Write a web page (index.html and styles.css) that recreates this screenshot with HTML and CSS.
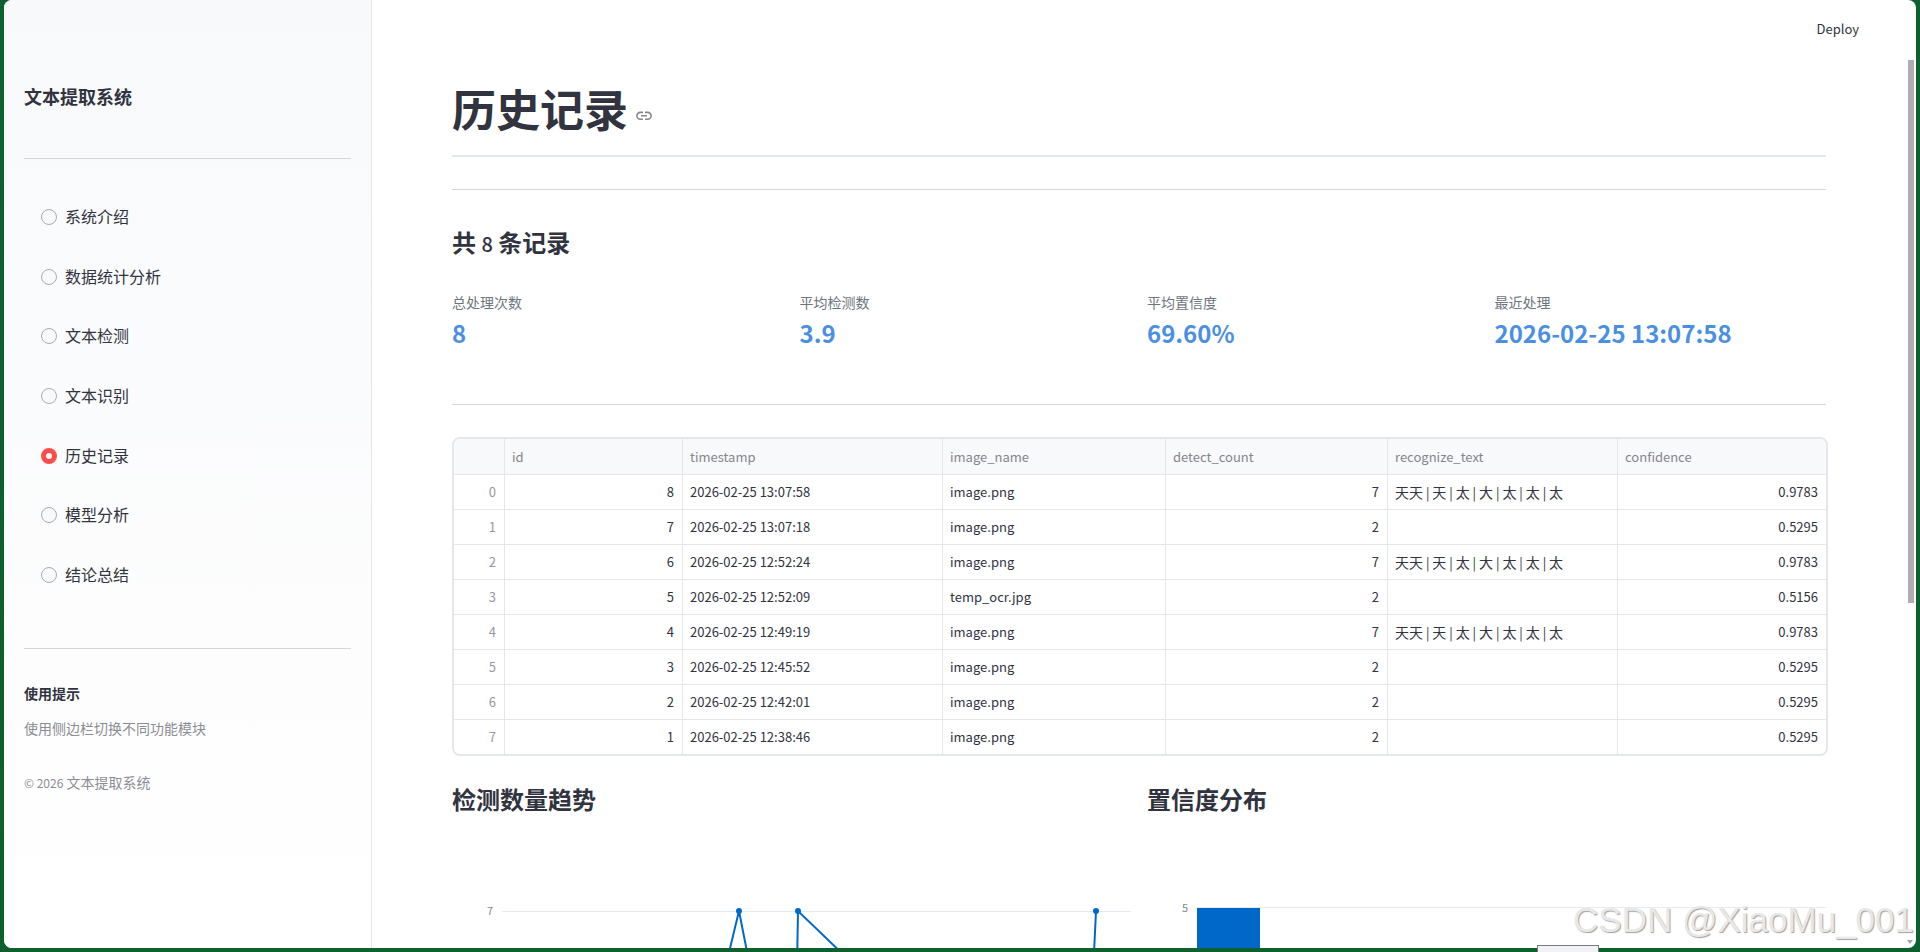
FILE: index.html
```html
<!DOCTYPE html>
<html lang="zh-CN">
<head>
  <meta charset="UTF-8" />
  <meta name="viewport" content="width=device-width, initial-scale=1.0"/>
  <title>文本提取系统</title>
  <link rel="stylesheet" href="styles.css">
</head>
<body>

  <div class="app">
    <aside class="sidebar">
      <h3 class="brand">文本提取系统</h3>
      <hr>
      <nav class="menu">
        <label><input type="radio" name="page"><span>系统介绍</span></label>
        <label><input type="radio" name="page"><span>数据统计分析</span></label>
        <label><input type="radio" name="page"><span>文本检测</span></label>
        <label><input type="radio" name="page"><span>文本识别</span></label>
        <label><input type="radio" name="page" checked><span>历史记录</span></label>
        <label><input type="radio" name="page"><span>模型分析</span></label>
        <label><input type="radio" name="page"><span>结论总结</span></label>
      </nav>
      <hr>
      <p class="tip-title">使用提示</p>
      <p class="caption">使用侧边栏切换不同功能模块</p>
      <p class="caption copyright"><small>© 2026</small> 文本提取系统</p>
    </aside>

    <main class="main">
      <header class="toolbar">
        <button class="deploy-btn">Deploy</button>
      </header>

      <div class="content">
        <h1>历史记录
          <a href="#history" aria-label="链接">
            <svg width="16" height="16" viewBox="0 0 16 16" fill="none" stroke="#85868d" stroke-width="1.6">
              <path d="M7 4.4H4.3a3.4 3.4 0 0 0 0 6.8H7M9 4.4h2.7a3.4 3.4 0 0 1 0 6.8H9M5 7.8h6"/>
            </svg>
          </a>
        </h1>
        <hr>

        <h2>共 <span>8</span> 条记录</h2>

        <div class="metrics">
          <div class="metric">
            <div class="metric-label">总处理次数</div>
            <div class="metric-value">8</div>
          </div>
          <div class="metric">
            <div class="metric-label">平均检测数</div>
            <div class="metric-value">3.9</div>
          </div>
          <div class="metric">
            <div class="metric-label">平均置信度</div>
            <div class="metric-value">69.60%</div>
          </div>
          <div class="metric">
            <div class="metric-label">最近处理</div>
            <div class="metric-value">2026-02-25 13:07:58</div>
          </div>
        </div>
        <hr>

        <div class="table-box">
          <table>
            <colgroup>
              <col class="c-index"><col class="c-id"><col class="c-time"><col class="c-name"><col class="c-count"><col class="c-text"><col>
            </colgroup>
            <thead>
              <tr><th></th><th>id</th><th>timestamp</th><th>image_name</th><th>detect_count</th><th>recognize_text</th><th>confidence</th></tr>
            </thead>
            <tbody>
              <tr><td>0</td><td>8</td><td>2026-02-25 13:07:58</td><td>image.png</td><td>7</td><td><span>天天</span> | <span>天</span> | <span>太</span> | <span>大</span> | <span>太</span> | <span>太</span> | <span>太</span></td><td>0.9783</td></tr>
              <tr><td>1</td><td>7</td><td>2026-02-25 13:07:18</td><td>image.png</td><td>2</td><td></td><td>0.5295</td></tr>
              <tr><td>2</td><td>6</td><td>2026-02-25 12:52:24</td><td>image.png</td><td>7</td><td><span>天天</span> | <span>天</span> | <span>太</span> | <span>大</span> | <span>太</span> | <span>太</span> | <span>太</span></td><td>0.9783</td></tr>
              <tr><td>3</td><td>5</td><td>2026-02-25 12:52:09</td><td>temp_ocr.jpg</td><td>2</td><td></td><td>0.5156</td></tr>
              <tr><td>4</td><td>4</td><td>2026-02-25 12:49:19</td><td>image.png</td><td>7</td><td><span>天天</span> | <span>天</span> | <span>太</span> | <span>大</span> | <span>太</span> | <span>太</span> | <span>太</span></td><td>0.9783</td></tr>
              <tr><td>5</td><td>3</td><td>2026-02-25 12:45:52</td><td>image.png</td><td>2</td><td></td><td>0.5295</td></tr>
              <tr><td>6</td><td>2</td><td>2026-02-25 12:42:01</td><td>image.png</td><td>2</td><td></td><td>0.5295</td></tr>
              <tr><td>7</td><td>1</td><td>2026-02-25 12:38:46</td><td>image.png</td><td>2</td><td></td><td>0.5295</td></tr>
            </tbody>
          </table>
        </div>

        <div class="charts">
          <section>
            <h2>检测数量趋势</h2>
            <svg class="chart" viewBox="0 0 679 400">
              <path class="grid" d="M50 80.5H679"/>
              <text x="41" y="84">7</text>
              <polyline class="line" points="85,354 147,354 221,354 287,80 341,354 346,80 631,354 644,80"/>
              <g class="dots">
                <circle cx="85" cy="354" r="3"/>
                <circle cx="147" cy="354" r="3"/>
                <circle cx="221" cy="354" r="3"/>
                <circle cx="287" cy="80" r="3"/>
                <circle cx="341" cy="354" r="3"/>
                <circle cx="346" cy="80" r="3"/>
                <circle cx="631" cy="354" r="3"/>
                <circle cx="644" cy="80" r="3"/>
              </g>
            </svg>
          </section>
          <section>
            <h2>置信度分布</h2>
            <svg class="chart" viewBox="0 0 679 400">
              <path class="grid" d="M50 76.5H679"/>
              <text x="41" y="81">5</text>
              <rect class="bar" x="50" y="77" width="63" height="277"/>
            </svg>
          </section>
        </div>
      </div>

      <div class="scroll-thumb"></div>
      <div class="scroll-arrow"></div>
    </main>
  </div>

  <div class="taskbar-tip"></div>
  <div class="watermark">CSDN @XiaoMu_001</div>

</body>
</html>
```

FILE: styles.css
```css
* {
  box-sizing: border-box;
}

body {
  margin: 0;
  height: 100vh;
  padding: 0 4px 4px;
  background-color: #0f602f;
  font-family: "Noto Sans CJK SC", sans-serif;
  font-size: 14px;
  color: #31333f;
  overflow: hidden;
}

h1, h2, h3, p {
  margin: 0;
}

hr {
  width: 100%;
  height: 1px;
  margin: 32px 0;
  border: none;
  background-color: #d6d6d9;
}

.app {
  display: flex;
  height: 100%;
  background-color: white;
  border-radius: 8px;
  overflow: hidden;
}

/* sidebar */
.sidebar {
  flex: 0 0 368px;
  padding: 83px 20px 0;
  background: linear-gradient(180deg, #f8f9fb 0%, #ffffff 100%);
  border-right: 1px solid #e3e6ea;
}

.brand {
  font-size: 18px;
  line-height: 26px;
}

.sidebar .brand + hr {
  margin: 49px 0 28px;
}

.menu {
  display: grid;
  grid-auto-rows: 1fr;
  height: 418px;
}

.menu label {
  display: flex;
  align-items: center;
  gap: 8px;
  padding-left: 17px;
  font-size: 16px;
  line-height: 24px;
}

.menu span {
  padding-bottom: 2px;
}

.menu input {
  appearance: none;
  width: 16px;
  height: 16px;
  margin: 0;
  border: 1px solid #aaabb0;
  border-radius: 50%;
  background-color: #f8f9fb;
}

.menu input:checked {
  border: 5px solid #ff4b4b;
}

.menu + hr {
  margin: 43px 0 32px;
}

.tip-title {
  font-weight: bold;
  line-height: 24px;
}

.caption {
  margin-top: 12px;
  line-height: 22px;
  color: #8c8d94;
}

.caption small {
  font-size: 12px;
}

.copyright {
  margin-top: 32px;
}

/* main area */
.main {
  position: relative;
  flex: 1;
  min-width: 0;
  overflow: hidden;
}

.toolbar {
  display: flex;
  justify-content: flex-end;
  align-items: center;
  height: 60px;
  padding: 0 57px 4px 0;
}

.deploy-btn {
  padding: 0;
  border: none;
  background: none;
  font-family: inherit;
  font-size: 13px;
  color: #31333f;
  cursor: pointer;
}

.content {
  padding: 20px 90px 0 80px;
}

h1 {
  display: flex;
  align-items: center;
  gap: 8px;
  height: 77px;
  padding-bottom: 19px;
  border-bottom: 2px solid #e1e8ed;
  font-size: 44px;
  line-height: 56px;
}

h1 a {
  height: 16px;
  margin-top: 10px;
  line-height: 0;
}

h2 {
  font-size: 24px;
  line-height: 32px;
}

h2 span {
  font-size: 20px;
  font-weight: 500;
}

.content h2 {
  padding: 4px 0 8px;
}

.metrics {
  display: grid;
  grid-template-columns: repeat(4, 1fr);
  gap: 16px;
  margin-top: 22px;
}

.metric-label {
  line-height: 24px;
  color: #6c757d;
}

.metric-value {
  font-size: 24px;
  font-weight: 600;
  line-height: 38px;
  color: #4a90e2;
}

.metrics + hr {
  margin-top: 52px;
}

.table-box {
  margin-right: -2px;
  border: 2px solid #e4e8ec;
  border-radius: 8px;
  overflow: hidden;
}

table {
  width: 100%;
  table-layout: fixed;
  border-collapse: separate;
  border-spacing: 0;
}

.c-index { width: 51px; }
.c-id { width: 178px; }
.c-time { width: 260px; }
.c-name { width: 223px; }
.c-count { width: 222px; }
.c-text { width: 230px; }

th, td {
  height: 35px;
  padding: 0 8px 0 7px;
  border-right: 1px solid #e6e6ea;
  border-bottom: 1px solid #e6e6ea;
  font-size: 13px;
  line-height: 20px;
  text-align: left;
  white-space: nowrap;
}

th {
  height: 36px;
  background-color: #f8f9fb;
  font-weight: normal;
  color: #85868d;
}

th:last-child, td:last-child {
  border-right: none;
}

tbody tr:last-child td {
  height: 34px;
  border-bottom: none;
}

td:nth-child(1), td:nth-child(2), td:nth-child(5), td:nth-child(7) {
  text-align: right;
}

td:nth-child(1) {
  color: #97989e;
}

td span {
  font-size: 14px;
}

/* charts */
.charts {
  display: grid;
  grid-template-columns: 1fr 1fr;
  gap: 16px;
  margin-top: 23px;
}

.chart {
  display: block;
  width: 100%;
  margin-top: 8px;
}

.chart text {
  font-size: 11px;
  text-anchor: end;
  fill: #85868d;
}

.grid {
  stroke: #e6eaf1;
}

.line {
  fill: none;
  stroke: #0068c9;
  stroke-width: 2;
}

.dots, .bar {
  fill: #0068c9;
}

.scroll-thumb {
  position: absolute;
  top: 60px;
  right: 2px;
  width: 6px;
  height: 543px;
  background-color: #adadb2;
}

.scroll-arrow {
  position: absolute;
  right: 3px;
  bottom: 4px;
  border: 3px solid transparent;
  border-top: 4px solid #a5a5aa;
  border-bottom: none;
}

.taskbar-tip {
  position: absolute;
  right: 321px;
  bottom: 0;
  width: 62px;
  height: 7px;
  border: 1px solid #77787c;
  border-bottom: none;
  background-color: #f0f2f8;
}

.watermark {
  position: absolute;
  right: 6px;
  bottom: 10px;
  font-family: "Liberation Sans", sans-serif;
  font-size: 35px;
  line-height: 44px;
  color: #e8e8e8;
  text-shadow: 1px 1px 1px #a0a0a0;
}
```
